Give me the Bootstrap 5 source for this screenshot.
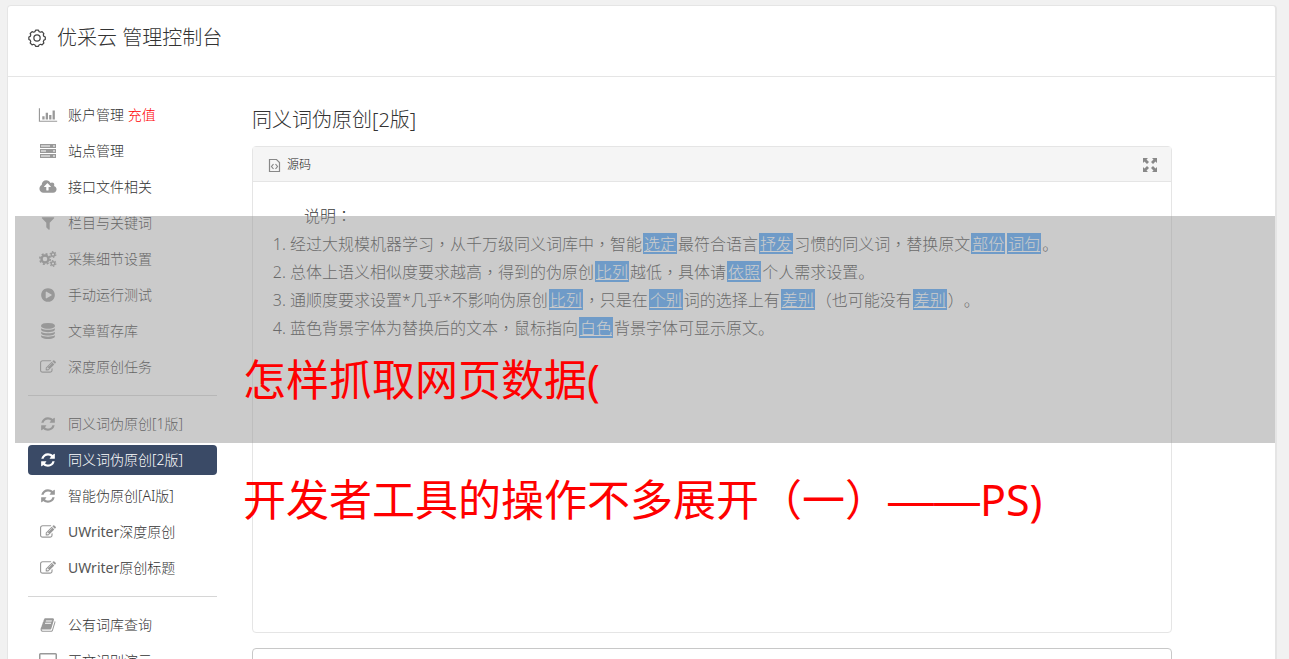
<!DOCTYPE html>
<html lang="zh-CN">
<head>
<meta charset="utf-8">
<meta name="viewport" content="width=device-width, initial-scale=1">
<title>优采云 管理控制台</title>
<link href="https://cdn.jsdelivr.net/npm/bootstrap@5.3.0/dist/css/bootstrap.min.css" rel="stylesheet">
<style>
  body { background: #f1f1f1; color: #333; font-family: "Noto Sans", "Noto Sans CJK SC", sans-serif; padding: 5px 12px 0 7px; text-spacing-trim: space-all; }
  .console { border: 1px solid #e5e5e5; border-right-width: 2px; border-radius: 4px 4px 0 0; }
  .console-head { height: 71px; padding: 0 20px 6px; gap: 10px; border-bottom: 1px solid #e5e5e5; }
  .console-title { font-size: 20px; line-height: 28px; font-weight: 300; }
  .console-body { padding: 23px 103px 0 20px; }
  .side { width: 189px; margin-right: 35px; }
  .side .nav-link { height: 30px; margin-bottom: 6px; padding: 0 10px; gap: 10px; font-size: 14px; line-height: 30px; font-weight: 300; color: #333; border-radius: 4px; white-space: nowrap; }
  .side .nav-link svg { width: 20px; height: 16px; fill: #999; flex: none; }
  .side .nav-link.active { background: #3a4a66; color: #fff; }
  .side .nav-link.active svg { fill: #fff; }
  .side .topup { color: #f00; }
  .side .latin { font-weight: 400; color: #555; }
  .side hr { margin: 7px 0 13px; color: #bbb; opacity: .6; }
  .page-title { font-size: 20px; line-height: 28px; font-weight: 300; margin: 6px 0 12px; }
  .editor { border: 1px solid #e5e5e5; border-radius: 4px; height: 487px; }
  .editor-bar { height: 35px; padding: 2px 14px 0; background: #f5f5f5; border-bottom: 1px solid #e5e5e5; }
  .tool { border: 0; background: none; padding: 0; font-size: 12px; font-weight: 300; color: #222; gap: 5px; }
  .doc { padding: 20px 19px; font-size: 16px; line-height: 28px; font-weight: 300; color: #3c3c3c; }
  .doc p { margin: 0 0 0 32px; }
  .doc ol { margin: 0; padding-left: 18px; }
  .doc li a { display: inline-block; height: 21px; margin: 3px 1px 0; padding: 0 1px; vertical-align: top; line-height: 22px; background: #469ff9; color: #fff; }
  .mid { font-family: "Noto Sans CJK TC", sans-serif; line-height: 1; }
  .dash { font-family: "Liberation Sans", sans-serif; font-size: 46px; line-height: 1; }
  .result { height: 160px; margin-top: 15px; border: 1px solid #c8c8c8; border-radius: 4px; resize: none; }
  .caption-layer { top: 216px; left: 15px; right: 14px; pointer-events: none; }
  .band { height: 227px; background: rgba(151, 151, 151, .5); }
  .caption-text { top: 104px; left: 228px; font-size: 43px; line-height: 120px; color: #f00; }
</style>
</head>
<body class="vh-100 overflow-hidden position-relative">
<svg class="d-none" aria-hidden="true">
  <symbol id="i-refresh" viewBox="0 0 1792 1792"><path d="M1639 1056q0 5-1 7-64 268-268 434.500t-478 166.500q-146 0-282.500-55t-243.500-157l-129 129q-19 19-45 19t-45-19-19-45v-448q0-26 19-45t45-19h448q26 0 45 19t19 45-19 45l-137 137q71 66 161 102t187 36q134 0 250-65t186-179q11-17 53-117 8-23 30-23h192q13 0 22.500 9.500t9.500 22.500zm25-800v448q0 26-19 45t-45 19h-448q-26 0-45-19t-19-45 19-45l138-138q-148-137-349-137-134 0-250 65t-186 179q-11 17-53 117-8 23-30 23h-199q-13 0-22.500-9.500t-9.500-22.500v-7q65-268 270-434.500t480-166.500q146 0 284 55.500t245 156.500l130-129q19-19 45-19t45 19 19 45z"/></symbol>
  <symbol id="i-edit" viewBox="0 0 1792 1792"><path d="M888 1184l116-116-152-152-116 116v56h96v96h56zm440-720q-16-16-33 1l-350 350q-17 17-1 33t33-1l350-350q17-17 1-33zm80 594v190q0 119-84.500 203.500t-203.500 84.500h-832q-119 0-203.500-84.500t-84.500-203.500v-832q0-119 84.500-203.500t203.500-84.500h832q63 0 117 25 15 7 18 23 3 17-9 29l-49 49q-14 14-32 8-23-6-45-6h-832q-66 0-113 47t-47 113v832q0 66 47 113t113 47h832q66 0 113-47t47-113v-126q0-13 9-22l64-64q15-15 35-7t20 29zm-96-738l288 288-672 672h-288v-288zm444 132l-92 92-288-288 92-92q28-28 68-28t68 28l152 152q28 28 28 68t-28 68z"/></symbol>
  <symbol id="i-chart" viewBox="0 0 2048 1792"><path d="M640 1024v384h-256v-384h256zm384-384v768h-256v-768h256zm1024 896v128h-2048v-1536h128v1408h1920zm-640-640v512h-256v-512h256zm384-512v1024h-256v-1024h256z"/></symbol>
  <symbol id="i-server" viewBox="-2 -1 20 16"><path fill-rule="evenodd" d="M0 0h16v4H0zM1 1.500h9v1H1zM13 1.500h2v1h-2zM0 5h16v4H0zM1 6.500h5v1H1zM13 6.500h2v1h-2zM0 10h16v4H0zM1 11.500h9v1H1zM13 11.500h2v1h-2z"/></symbol>
  <symbol id="i-cloud" viewBox="0 0 1920 1792"><path d="M1280 864q0-14-9-23l-352-352q-9-9-23-9t-23 9l-351 351q-10 12-10 24 0 14 9 23t23 9h224v352q0 13 9.500 22.500t22.500 9.500h192q13 0 22.500-9.500t9.500-22.500v-352h224q13 0 22.500-9.500t9.500-22.500zm640 288q0 159-112.500 271.500t-271.500 112.500h-1088q-185 0-316.500-131.500t-131.500-316.500q0-130 70-240t188-165q-2-30-2-43 0-212 150-362t362-150q156 0 285.500 87t188.500 231q71-62 166-62 106 0 181 75t75 181q0 76-41 138 130 31 213.500 135.500t83.500 238.500z"/></symbol>
  <symbol id="i-filter" viewBox="0 0 1792 1792"><path d="M1595 295q17 41-14 70l-493 493v742q0 42-39 59-13 5-25 5-27 0-45-19l-256-256q-19-19-19-45v-486l-493-493q-31-29-14-70 17-39 59-39h1280q42 0 59 39z"/></symbol>
  <symbol id="i-cogs" viewBox="0 0 18 16"><g fill="none" stroke="#999"><circle cx="6" cy="8" r="3.500" stroke-width="2.400"/><circle cx="6" cy="8" r="5.200" stroke-width="1.600" stroke-dasharray="2.040"/><circle cx="14" cy="3.500" r="1.800" stroke-width="1.400"/><circle cx="14" cy="3.500" r="2.900" stroke-width="1.100" stroke-dasharray="1.520"/><circle cx="14" cy="12.500" r="1.800" stroke-width="1.400"/><circle cx="14" cy="12.500" r="2.900" stroke-width="1.100" stroke-dasharray="1.520"/></g></symbol>
  <symbol id="i-play" viewBox="0 0 1792 1792"><path d="M896 128q209 0 385.500 103t279.500 279.500 103 385.500-103 385.500-279.500 279.500-385.500 103-385.500-103-279.500-279.500-103-385.500 103-385.500 279.500-279.500 385.500-103zm384 823q32-18 32-55t-32-55l-544-320q-31-19-64-1-32 19-32 56v640q0 37 32 56 16 8 32 8 17 0 32-9z"/></symbol>
  <symbol id="i-db" viewBox="0 0 1792 1792"><path d="M896 768q237 0 443-43t325-127v170q0 69-103 128t-280 93.500-385 34.500-385-34.500-280-93.500-103-128v-170q119 84 325 127t443 43zm0 768q237 0 443-43t325-127v170q0 69-103 128t-280 93.500-385 34.500-385-34.500-280-93.500-103-128v-170q119 84 325 127t443 43zm0-384q237 0 443-43t325-127v170q0 69-103 128t-280 93.500-385 34.500-385-34.500-280-93.500-103-128v-170q119 84 325 127t443 43zm0-1152q208 0 385 34.500t280 93.500 103 128v128q0 69-103 128t-280 93.500-385 34.500-385-34.500-280-93.500-103-128v-128q0-69 103-128t280-93.500 385-34.500z"/></symbol>
  <symbol id="i-book" viewBox="0 0 1792 1792"><path d="M1703 478q40 57 18 129l-275 906q-19 64-76.500 107.500t-122.500 43.500h-923q-77 0-148.500-53.500t-99.500-131.500q-24-67-2-127 0-4 3-27t4-37q1-8-3-21.500t-3-19.500q2-11 8-21t16.500-23.500 16.500-23.500q23-38 45-91.500t30-91.500q3-10 .5-30t-.5-28q3-11 17-28t17-23q21-36 42-92t25-90q1-9-2.500-32t.5-28q4-13 22-30.500t22-22.500q19-26 42.500-84.500t27.500-96.500q1-8-3-25.500t-2-26.500q2-8 9-18t18-23 17-21q8-12 16.500-30.500t15-35 16-36 19.500-32 26.500-23.500 36-11.500 47.500 5.500l-1 3q38-9 51-9h761q74 0 114 56t18 130l-274 906q-36 119-71.500 153.500t-128.500 34.500h-869q-27 0-38 15-11 16-1 43 24 70 144 70h923q29 0 56-15.500t35-41.500l300-987q7-22 5-57 38 15 59 43zm-1064 2q-4 13 2 22.500t20 9.500h608q13 0 25.500-9.500t16.500-22.500l21-64q4-13-2-22.500t-20-9.500h-608q-13 0-25.500 9.500t-16.500 22.500zm-83 256q-4 13 2 22.500t20 9.500h608q13 0 25.500-9.500t16.500-22.500l21-64q4-13-2-22.500t-20-9.500h-608q-13 0-25.500 9.500t-16.500 22.500z"/></symbol>
  <symbol id="i-screen" viewBox="0 0 18 16"><path fill-rule="evenodd" d="M1.500 0h15A1.500 1.500 0 0 1 18 1.500v10a1.500 1.500 0 0 1-1.500 1.500H12v2H6v-2H1.500A1.500 1.500 0 0 1 0 11.500v-10A1.500 1.500 0 0 1 1.500 0zM1.500 1.500v9h15v-9z"/></symbol>
</svg>

<div class="console bg-white">
  <header class="console-head d-flex align-items-center">
    <svg width="19" height="19" viewBox="0 0 20 20" fill="none" stroke="#444" stroke-width="1.300" stroke-linejoin="round" aria-hidden="true"><circle cx="9.500" cy="9.500" r="3.300"/><path d="M8 1.200h3l.6 1.500 1.700.7 1.500-.6 1.900 2-.6 1.500.7 1.500 1.400.6v2.700l-1.400.6-.7 1.600.6 1.500-1.900 1.900-1.500-.6-1.700.7-.6 1.400H8l-.6-1.400-1.600-.7-1.500.6-2-1.900.6-1.500-.6-1.600-1.400-.6V8.400l1.400-.6.600-1.500-.6-1.500 2-2 1.500.6 1.600-.7z"/></svg>
    <h1 class="console-title m-0">优采云 管理控制台</h1>
  </header>

  <div class="console-body d-flex align-items-start">
    <nav class="side nav flex-column flex-nowrap flex-shrink-0" aria-label="控制台">
      <a class="nav-link d-flex align-items-center" href="#"><svg><use href="#i-chart"/></svg><span>账户管理 <span class="topup">充值</span></span></a>
      <a class="nav-link d-flex align-items-center" href="#"><svg><use href="#i-server"/></svg>站点管理</a>
      <a class="nav-link d-flex align-items-center" href="#"><svg><use href="#i-cloud"/></svg>接口文件相关</a>
      <a class="nav-link d-flex align-items-center" href="#"><svg><use href="#i-filter"/></svg>栏目与关键词</a>
      <a class="nav-link d-flex align-items-center" href="#"><svg><use href="#i-cogs"/></svg>采集细节设置</a>
      <a class="nav-link d-flex align-items-center" href="#"><svg><use href="#i-play"/></svg>手动运行测试</a>
      <a class="nav-link d-flex align-items-center" href="#"><svg><use href="#i-db"/></svg>文章暂存库</a>
      <a class="nav-link d-flex align-items-center" href="#"><svg><use href="#i-edit"/></svg>深度原创任务</a>
      <hr>
      <a class="nav-link d-flex align-items-center" href="#"><svg><use href="#i-refresh"/></svg>同义词伪原创[1版]</a>
      <a class="nav-link active d-flex align-items-center" href="#" aria-current="page"><svg><use href="#i-refresh"/></svg>同义词伪原创[2版]</a>
      <a class="nav-link d-flex align-items-center" href="#"><svg><use href="#i-refresh"/></svg>智能伪原创[AI版]</a>
      <a class="nav-link d-flex align-items-center" href="#"><svg><use href="#i-edit"/></svg><span><span class="latin">UWriter</span>深度原创</span></a>
      <a class="nav-link d-flex align-items-center" href="#"><svg><use href="#i-edit"/></svg><span><span class="latin">UWriter</span>原创标题</span></a>
      <hr>
      <a class="nav-link d-flex align-items-center" href="#"><svg><use href="#i-book"/></svg>公有词库查询</a>
      <a class="nav-link d-flex align-items-center" href="#"><svg><use href="#i-screen"/></svg>正文识别演示</a>
    </nav>

    <main class="flex-grow-1">
      <h2 class="page-title">同义词伪原创[2版]</h2>
      <section class="editor">
        <div class="editor-bar d-flex align-items-center justify-content-between">
          <button type="button" class="tool d-flex align-items-center"><svg width="15" height="16" viewBox="0 0 15 16" fill="none" stroke="#888" aria-hidden="true"><path stroke-width="1.200" d="M2.500 2.500h7l3 3v9h-10z"/><path stroke-width="1.200" d="M6.500 7L4.500 9.500l2 2.500M8.500 7l2 2.500-2 2.500"/></svg>源码</button>
          <button type="button" class="tool d-flex" aria-label="全屏"><svg width="14" height="14" viewBox="0 0 14 14" fill="#888" aria-hidden="true"><path d="M0 0h5L3.500 1.500 6 4 4 6 1.500 3.500 0 5zM14 0v5l-1.500-1.500L10 6 8 4l2.500-2.500L9 0zM0 14V9l1.500 1.500L4 8l2 2-2.500 2.500L5 14zM14 14H9l1.500-1.500L8 10l2-2 2.500 2.500L14 9z"/></svg></button>
        </div>
        <div class="doc">
          <p>说明<span class="mid" lang="zh-TW">：</span></p>
          <ol>
            <li>经过大规模机器学习<span class="mid" lang="zh-TW">，</span>从千万级同义词库中<span class="mid" lang="zh-TW">，</span>智能<a href="#">选定</a>最符合语言<a href="#">抒发</a>习惯的同义词<span class="mid" lang="zh-TW">，</span>替换原文<a href="#">部份</a><a href="#">词句</a>。</li>
            <li>总体上语义相似度要求越高<span class="mid" lang="zh-TW">，</span>得到的伪原创<a href="#">比列</a>越低<span class="mid" lang="zh-TW">，</span>具体请<a href="#">依照</a>个人需求设置。</li>
            <li>通顺度要求设置*几乎*不影响伪原创<a href="#">比列</a><span class="mid" lang="zh-TW">，</span>只是在<a href="#">个别</a>词的选择上有<a href="#">差别</a><span class="mid" lang="zh-TW">（</span>也可能没有<a href="#">差别</a><span class="mid" lang="zh-TW">）</span>。</li>
            <li>蓝色背景字体为替换后的文本<span class="mid" lang="zh-TW">，</span>鼠标指向<a href="#">白色</a>背景字体可显示原文。</li>
          </ol>
        </div>
      </section>
      <textarea class="result d-block w-100" aria-label="原文"></textarea>
    </main>
  </div>
</div>

<div class="caption-layer position-absolute">
  <div class="band"></div>
  <div class="caption-text position-absolute text-nowrap">怎样抓取网页数据(<br>开发者工具的操作不多展开（一）<span class="dash">——</span>PS)</div>
</div>
<script src="https://cdn.jsdelivr.net/npm/bootstrap@5.3.0/dist/js/bootstrap.bundle.min.js"></script>
</body>
</html>
